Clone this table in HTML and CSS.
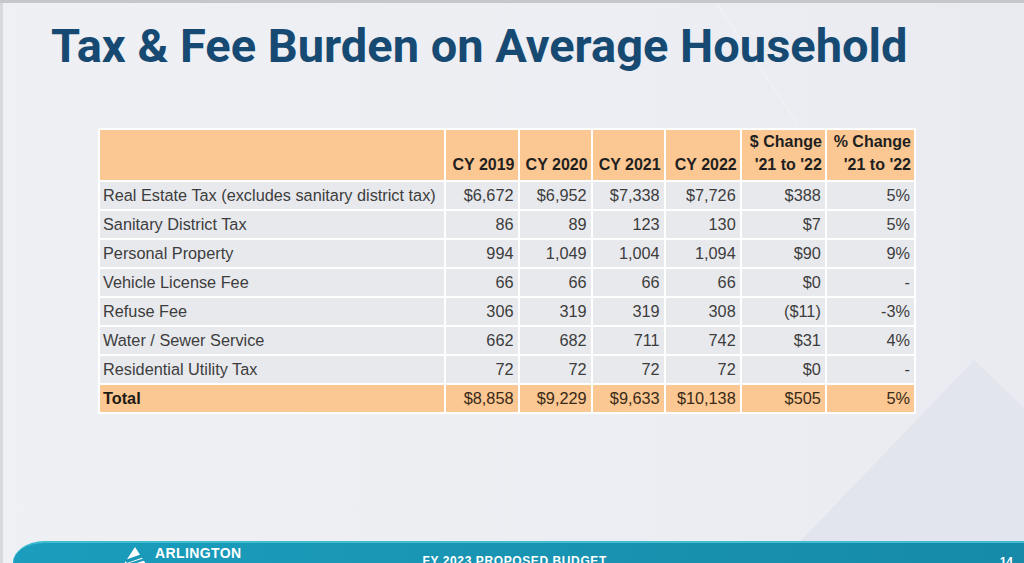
FILE: index.html
```html
<!DOCTYPE html>
<html lang="en">
<head>
<meta charset="utf-8">
<title>Tax &amp; Fee Burden on Average Household</title>
<link rel="stylesheet" href="styles.css">
</head>
<body>
<div class="topbar"></div>
<div class="slide">
  <div class="mountain"></div>
  <div class="streak"></div>
  <h1 class="title">Tax &amp; Fee Burden on Average Household</h1>
  <table class="burden">
    <colgroup>
      <col class="c-label"><col class="c-yr"><col class="c-yr"><col class="c-yr"><col class="c-yr4"><col class="c-chg"><col class="c-pct">
    </colgroup>
    <thead>
      <tr>
        <th class="lbl"></th>
        <th>CY 2019</th>
        <th>CY 2020</th>
        <th>CY 2021</th>
        <th>CY 2022</th>
        <th>$ Change<br>'21 to '22</th>
        <th>% Change<br>'21 to '22</th>
      </tr>
    </thead>
    <tbody>
      <tr><td class="lbl">Real Estate Tax (excludes sanitary district tax)</td><td>$6,672</td><td>$6,952</td><td>$7,338</td><td>$7,726</td><td>$388</td><td>5%</td></tr>
      <tr><td class="lbl">Sanitary District Tax</td><td>86</td><td>89</td><td>123</td><td>130</td><td>$7</td><td>5%</td></tr>
      <tr><td class="lbl">Personal Property</td><td>994</td><td>1,049</td><td>1,004</td><td>1,094</td><td>$90</td><td>9%</td></tr>
      <tr><td class="lbl">Vehicle License Fee</td><td>66</td><td>66</td><td>66</td><td>66</td><td>$0</td><td>-</td></tr>
      <tr><td class="lbl">Refuse Fee</td><td>306</td><td>319</td><td>319</td><td>308</td><td class="neg">($11)</td><td>-3%</td></tr>
      <tr><td class="lbl">Water / Sewer Service</td><td>662</td><td>682</td><td>711</td><td>742</td><td>$31</td><td>4%</td></tr>
      <tr><td class="lbl">Residential Utility Tax</td><td>72</td><td>72</td><td>72</td><td>72</td><td>$0</td><td>-</td></tr>
      <tr class="total"><td class="lbl">Total</td><td>$8,858</td><td>$9,229</td><td>$9,633</td><td>$10,138</td><td>$505</td><td>5%</td></tr>
    </tbody>
  </table>
  <footer class="footer">
    <div class="brand">
      <svg class="logo" width="26" height="20" viewBox="0 0 26 20">
        <polygon points="13,0 26,20 0,20" fill="#ffffff"/>
        <path d="M3 13 L20 7 L22 10 L5 16 Z" fill="#1a97b7"/>
        <path d="M1 18 L23 11 L24 13 L2 20 Z" fill="#1a97b7"/>
      </svg>
      <span class="brand-name">ARLINGTON</span>
    </div>
    <span class="budget">FY 2023 PROPOSED BUDGET</span>
    <span class="page">14</span>
  </footer>
</div>
</body>
</html>
```

FILE: styles.css
```css
html, body {
  margin: 0;
  padding: 0;
}
body {
  width: 1024px;
  height: 563px;
  overflow: hidden;
  display: flex;
  flex-direction: column;
  background: linear-gradient(90deg, #eef0f4 0%, #eceef3 60%, #e9ebf1 100%);
  font-family: "Liberation Sans", Arial, sans-serif;
}
.topbar {
  height: 3px;
  background: #c6c7cb;
  flex: none;
}
.slide {
  flex: 1;
  display: flex;
  flex-direction: column;
  border-left: 3px solid #d8d9de;
  position: relative;
  overflow: hidden;
}
.mountain {
  position: absolute;
  left: 760px;
  top: 357px;
  width: 440px;
  height: 220px;
  background: #e3e5ee;
  clip-path: polygon(48% 0, 100% 100%, 0 100%);
  z-index: 0;
}
.streak {
  position: absolute;
  left: 706px;
  top: -10px;
  width: 1px;
  height: 160px;
  background: rgba(255,255,255,0.35);
  transform: rotate(-34deg);
  transform-origin: top left;
  z-index: 0;
}
.title {
  position: relative;
  z-index: 1;
  margin: 15px 0 0 48px;
  font-family: Roboto, "Liberation Sans", sans-serif;
  font-weight: 700;
  font-size: 47px;
  line-height: 56px;
  color: #174a72;
}
.burden {
  position: relative;
  z-index: 1;
  margin: 54px 0 0 95px;
  border-collapse: separate;
  border-spacing: 2px;
  background: #ffffff;
  table-layout: fixed;
  width: 818px;
}
.c-label { width: 344px; }
.c-yr { width: 71px; }
.c-yr4 { width: 74px; }
.c-chg { width: 83px; }
.c-pct { width: 87px; }
.burden th {
  background: #fbc793;
  color: #1f1f1f;
  font-weight: 700;
  font-size: 16px;
  line-height: 23px;
  text-align: right;
  vertical-align: bottom;
  padding: 0 3px 4px 0;
  height: 46px;
  white-space: nowrap;
}
.burden td {
  background: #e8e9ed;
  color: #3d3d3d;
  font-size: 16.3px;
  line-height: 19px;
  height: 27px;
  padding: 0 4px 0 0;
  text-align: right;
  vertical-align: middle;
  white-space: nowrap;
}
.burden td.lbl {
  text-align: left;
  padding: 0 0 0 3px;
}
.burden .total td {
  background: #fbc793;
  color: #3a2a18;
}
.burden .total td.lbl {
  font-weight: 700;
  color: #1f1a14;
}
.footer {
  position: relative;
  z-index: 1;
  margin-top: auto;
  margin-left: 10px;
  height: 20px;
  border-top: 2px solid #3fbed2;
  border-top-left-radius: 34px 24px;
  background: linear-gradient(90deg, #1b9dbd 0%, #1996b4 40%, #168aa8 100%);
  display: flex;
  align-items: flex-start;
  color: #ffffff;
}
.brand {
  display: flex;
  align-items: flex-start;
  margin-left: 109px;
  margin-top: 3px;
}
.logo {
  display: block;
  margin-top: 1px;
}
.brand-name {
  margin-left: 7px;
  font-weight: 700;
  font-size: 14px;
  line-height: 14px;
  letter-spacing: 0.4px;
}
.budget {
  margin-left: 181px;
  margin-top: 12px;
  font-weight: 700;
  font-size: 12px;
  line-height: 12px;
  letter-spacing: 0.6px;
}
.page {
  margin-left: auto;
  margin-right: 11px;
  margin-top: 13px;
  font-weight: 700;
  font-size: 12px;
  line-height: 12px;
}
```
